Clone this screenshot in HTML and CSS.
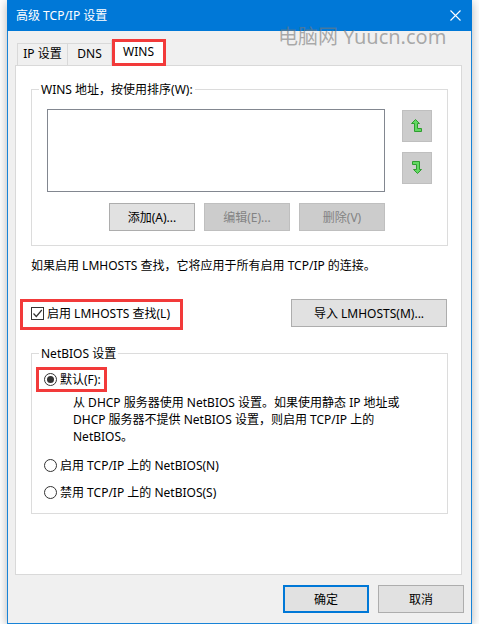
FILE: index.html
```html
<!DOCTYPE html>
<html lang="zh-CN">
<head>
  <meta charset="UTF-8" />
  <title>高级 TCP/IP 设置</title>
  <link rel="stylesheet" href="styles.css">
</head>
<body>

<div class="window">
  <div class="titlebar">
    <span class="title">高级 TCP/IP 设置</span>
    <svg class="close" width="11" height="11" viewBox="0 0 11 11">
      <path d="M0.5 0.5 L10.5 10.5 M10.5 0.5 L0.5 10.5" stroke="#fff" stroke-width="1.1" fill="none"/>
    </svg>
  </div>

  <div class="watermark">电脑网 Yuucn.com</div>

  <div class="client">
    <div class="tabs">
      <div class="tab tab-ip">IP 设置</div>
      <div class="tab tab-dns">DNS</div>
      <div class="tab tab-wins active marked">WINS</div>
    </div>

    <div class="panel">
      <fieldset class="group group-wins">
        <legend>WINS 地址，按使用排序(W):</legend>
        <div class="wins-body">
          <div class="wins-top">
            <div class="listbox"></div>
            <div class="arrows">
              <button class="arrow-btn" type="button">
                <svg width="12" height="14" viewBox="0 0 12 14">
                  <path d="M4.5 0.5 L8.5 4.5 L6.5 4.5 L6.5 9.5 L10.5 9.5 L10.5 12.5 L3.5 12.5 L3.5 4.5 L0.5 4.5 Z" fill="#62d862" stroke="#2f9d2f" stroke-width="1"/>
                </svg>
              </button>
              <button class="arrow-btn" type="button">
                <svg width="12" height="14" viewBox="0 0 12 14">
                  <path d="M1.5 0.5 L8.5 0.5 L8.5 8.5 L10.5 8.5 L6.5 12.5 L2.5 8.5 L5.5 8.5 L5.5 3.5 L1.5 3.5 Z" fill="#62d862" stroke="#2f9d2f" stroke-width="1"/>
                </svg>
              </button>
            </div>
          </div>
          <div class="wins-buttons">
            <button class="btn" type="button">添加(A)...</button>
            <button class="btn" type="button" disabled>编辑(E)...</button>
            <button class="btn" type="button" disabled>删除(V)</button>
          </div>
        </div>
      </fieldset>

      <p class="note">如果启用 LMHOSTS 查找，它将应用于所有启用 TCP/IP 的连接。</p>

      <div class="lm-row">
        <label class="check marked">
          <span class="box">
            <svg width="11" height="11" viewBox="0 0 11 11">
              <path d="M1.5 5.5 L4.3 8.5 L9.8 2" stroke="#333" stroke-width="1.2" fill="none"/>
            </svg>
          </span>
          启用 LMHOSTS 查找(L)
        </label>
        <button class="btn btn-import" type="button">导入 LMHOSTS(M)...</button>
      </div>

      <fieldset class="group group-netbios">
        <legend>NetBIOS 设置</legend>
        <div class="netbios-body">
          <div class="radio-line">
            <label class="radio marked"><span class="dot on"></span>默认(F):</label>
          </div>
          <p class="desc">从 DHCP 服务器使用 NetBIOS 设置。如果使用静态 IP 地址或<br>DHCP 服务器不提供 NetBIOS 设置，则启用 TCP/IP 上的<br>NetBIOS。</p>
          <div class="radio-line r2">
            <label class="radio"><span class="dot"></span>启用 TCP/IP 上的 NetBIOS(N)</label>
          </div>
          <div class="radio-line r3">
            <label class="radio"><span class="dot"></span>禁用 TCP/IP 上的 NetBIOS(S)</label>
          </div>
        </div>
      </fieldset>
    </div>

    <div class="footer">
      <button class="btn btn-ok" type="button">确定</button>
      <button class="btn" type="button">取消</button>
    </div>
  </div>
</div>

</body>
</html>
```

FILE: styles.css
```css
body {
  margin: 0;
  background: #fff;
  font-family: "Noto Sans", "Noto Sans CJK SC", sans-serif;
  font-size: 12px;
  line-height: 17px;
  color: #000;
}
.window {
  position: relative;
  box-sizing: border-box;
  width: 465px;
  height: 624px;
  margin-left: 7px;
  background: #f0f0f0;
  border: 1px solid #1883d7;
  border-top: none;
  box-shadow: 0 2px 10px rgba(0, 0, 0, 0.3);
}
.titlebar {
  height: 31px;
  margin: 0 -1px;
  background: #0078d7;
  color: #fff;
  display: flex;
  align-items: center;
  justify-content: space-between;
  padding: 0 11px 0 9px;
}
.title {
  margin-left: 0;
}
.watermark {
  position: absolute;
  left: 270px;
  top: 24px;
  font-size: 20px;
  line-height: 26px;
  color: rgba(120, 120, 120, 0.6);
  pointer-events: none;
}
.client {
  padding: 9px 0 0 7px;
}

/* tabs */
.tabs {
  display: flex;
  align-items: flex-end;
  height: 25px;
}
.tab {
  box-sizing: border-box;
  height: 22px;
  line-height: 20px;
  text-align: center;
  background: #f0f0f0;
  border: 1px solid #d9d9d9;
  border-bottom: none;
}
.tab-ip {
  width: 51px;
  margin-left: 2px;
}
.tab-dns {
  width: 45px;
  margin-left: -1px;
}
.tab-wins {
  width: 55px;
  height: 26px;
  line-height: 22px;
  margin-left: -1px;
  margin-bottom: -1px;
  background: #fff;
  z-index: 1;
}
.marked {
  position: relative;
}
.marked::after {
  content: "";
  position: absolute;
  border: 3px solid #f23a3a;
  pointer-events: none;
}
.tab-wins.marked::after {
  top: -2px;
  left: 0;
  right: -1px;
  bottom: 0;
}

.panel {
  box-sizing: border-box;
  width: 447px;
  height: 510px;
  padding: 15px 0 0 15px;
  background: #fff;
  border: 1px solid #d9d9d9;
}
.group {
  box-sizing: border-box;
  width: 417px;
  min-width: 0;
  margin: 0;
  padding: 0;
  border: 1px solid #dcdcdc;
}
.group legend {
  margin-left: 7px;
  padding: 0 2px;
  line-height: 17px;
}
.wins-body {
  padding: 11px 0 14px 15px;
}
.wins-top {
  display: flex;
}
.listbox {
  box-sizing: border-box;
  width: 338px;
  height: 83px;
  background: #fff;
  border: 1px solid #828790;
}
.arrows {
  display: flex;
  flex-direction: column;
  gap: 10px;
  margin: 1px 0 0 17px;
}
.arrow-btn {
  box-sizing: border-box;
  width: 30px;
  height: 32px;
  padding: 0;
  background: #cccccc;
  border: 1px solid #bfbfbf;
  display: flex;
  align-items: center;
  justify-content: center;
}
.wins-buttons {
  display: flex;
  gap: 9px;
  margin: 11px 0 0 62px;
}
.btn {
  box-sizing: border-box;
  width: 86px;
  height: 28px;
  padding: 0;
  font-family: inherit;
  font-size: 12px;
  color: #000;
  background: #e1e1e1;
  border: 1px solid #adadad;
}
.btn:disabled {
  background: #cccccc;
  border-color: #bfbfbf;
  color: #838383;
}
.note {
  margin: 11px 0 0;
}
.lm-row {
  display: flex;
  justify-content: space-between;
  align-items: flex-start;
  width: 416px;
  margin-top: 25px;
}
.check {
  display: inline-flex;
  align-items: center;
  height: 28px;
}
.check.marked::after {
  top: 0;
  left: -11px;
  right: -13px;
  bottom: -3px;
}
.box {
  box-sizing: border-box;
  width: 13px;
  height: 13px;
  margin-right: 3px;
  background: #fff;
  border: 1px solid #333;
  display: flex;
  align-items: center;
  justify-content: center;
}
.btn-import {
  width: 156px;
}
.group-netbios {
  margin-top: 18px;
}
.netbios-body {
  padding: 9px 0 12px 12px;
}
.radio-line {
  display: flex;
}
.radio {
  display: inline-flex;
  align-items: center;
  height: 17px;
}
.radio.marked::after {
  top: -4px;
  left: -8px;
  right: -6px;
  bottom: -4px;
}
.dot {
  box-sizing: border-box;
  width: 13px;
  height: 13px;
  margin-right: 3px;
  border: 1px solid #333;
  border-radius: 50%;
  background: #fff;
  position: relative;
}
.dot.on::before {
  content: "";
  position: absolute;
  left: 2px;
  top: 2px;
  width: 7px;
  height: 7px;
  border-radius: 50%;
  background: #333;
}
.desc {
  margin: 6px 0 0 29px;
  white-space: nowrap;
}
.r2 {
  margin-top: 12px;
}
.r3 {
  margin-top: 10px;
}
.footer {
  display: flex;
  justify-content: flex-end;
  gap: 9px;
  margin-top: 10px;
  padding-right: 7px;
}
.btn-ok {
  border: 2px solid #0078d7;
}
```
